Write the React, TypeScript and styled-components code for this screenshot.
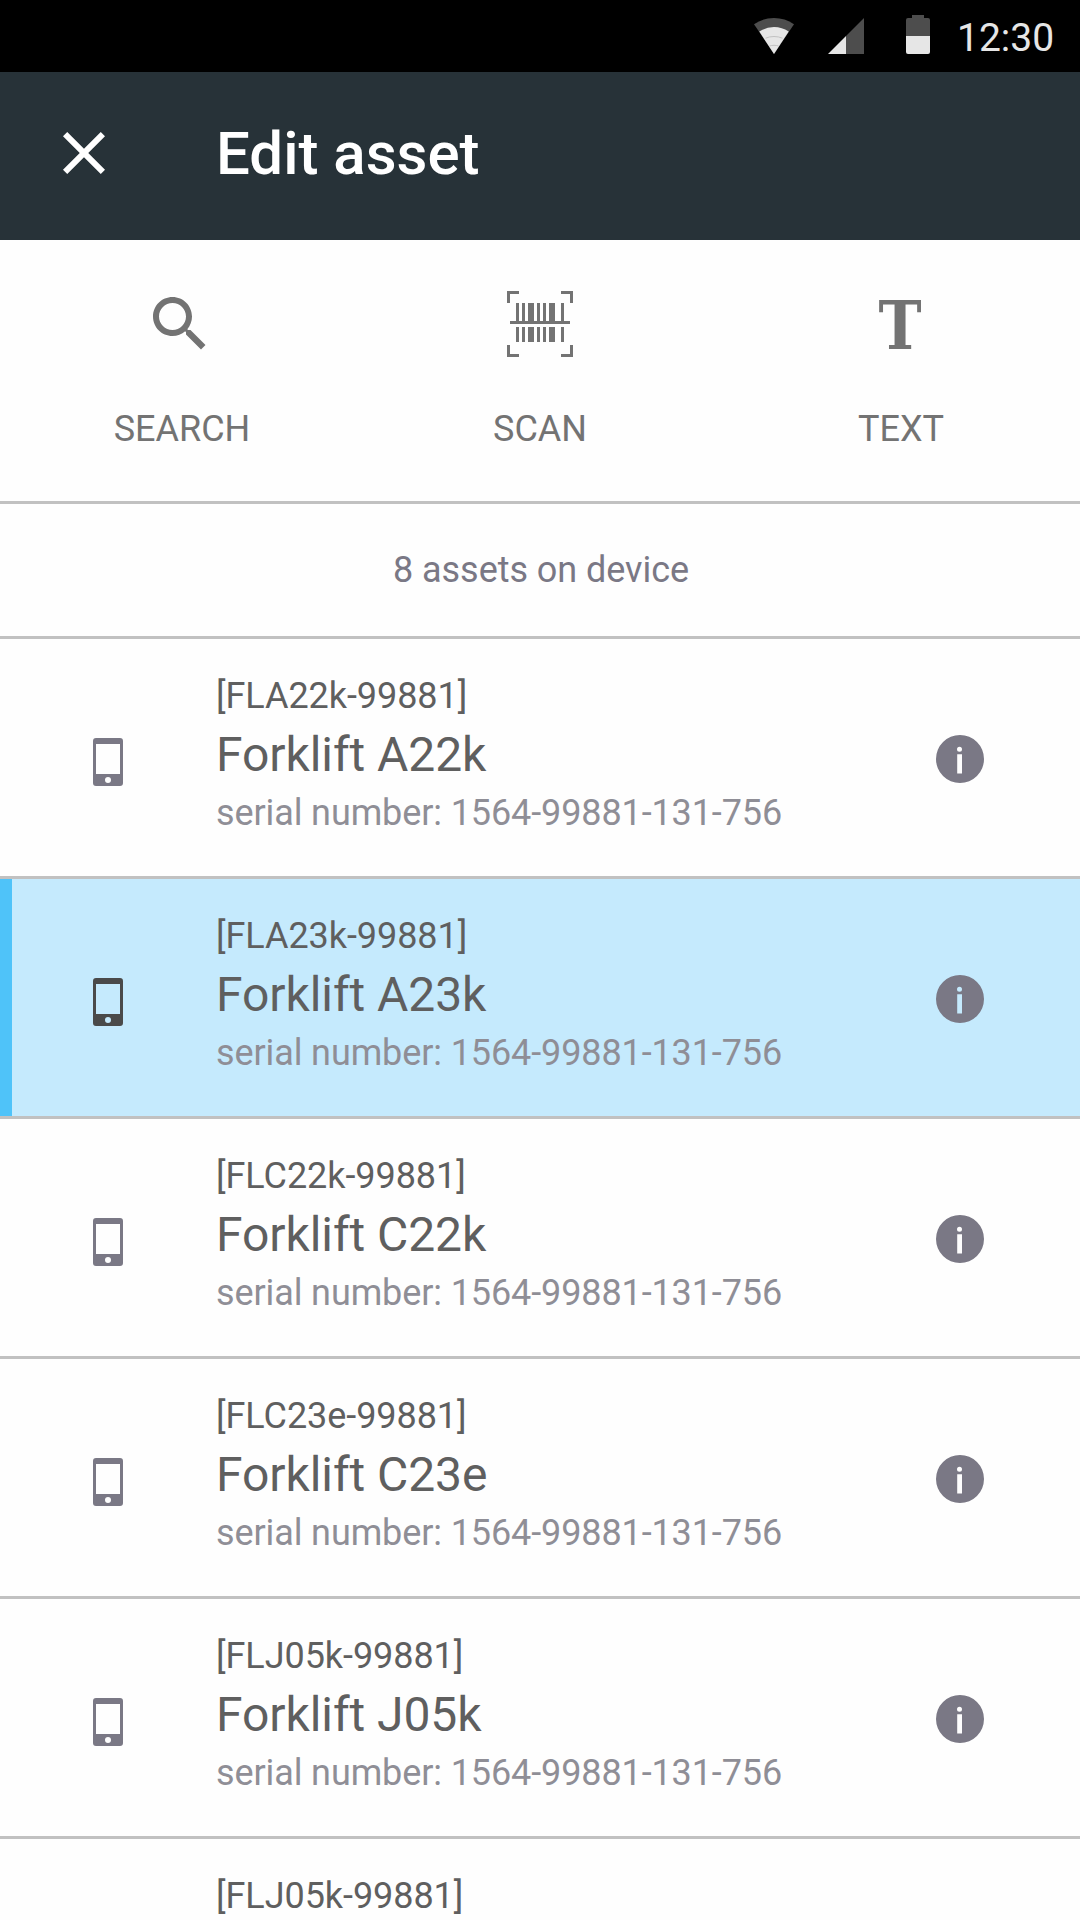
import React from "react";
import styled, { createGlobalStyle } from "styled-components";

const GlobalStyle = createGlobalStyle`
  html, body { margin: 0; padding: 0; background: #fefefe; }
  body { overflow: hidden; font-family: Roboto, "Liberation Sans", sans-serif; }
  * { box-sizing: border-box; }
  svg { display: block; flex: none; }
`;

const Screen = styled.main`
  width: 1080px;
  height: 1920px;
  overflow: hidden;
  display: flex;
  flex-direction: column;
  background: #fefefe;
`;

const StatusBar = styled.div`
  flex: none;
  height: 72px;
  padding-left: 754px;
  display: flex;
  align-items: flex-start;
  background: #000;
  color: #e6e6e6;
`;

const StatusIcon = styled.svg<{ $top: number; $gap: number }>`
  margin-top: ${(p) => p.$top}px;
  margin-right: ${(p) => p.$gap}px;
`;

const Clock = styled.span`
  margin-top: 14px;
  font-size: 39px;
  line-height: 48px;
`;

const AppBar = styled.header`
  flex: none;
  height: 168px;
  padding: 45px 48px 0;
  display: flex;
  align-items: flex-start;
  gap: 96px;
  background: #273238;
  color: #fff;
`;

const IconButton = styled.button`
  padding: 0;
  border: 0;
  background: none;
  color: inherit;
`;

const Title = styled.h1`
  margin: 1px 0 0;
  font-size: 60px;
  line-height: 71px;
  font-weight: 500;
`;

const Tools = styled.nav`
  flex: none;
  height: 264px;
  padding-top: 48px;
  display: grid;
  grid-template-columns: repeat(3, 1fr);
  border-bottom: 3px solid #c1c1c1;
  color: #737373;
`;

const Tool = styled.div`
  display: flex;
  flex-direction: column;
  align-items: center;
  gap: 48px;
`;

const ToolLabel = styled.span<{ $shift?: number }>`
  padding-left: ${(p) => p.$shift ?? 0}px;
  font-size: 36px;
  line-height: 42px;
`;

const TextGlyph = styled.span`
  width: 72px;
  height: 72px;
  text-align: center;
  font-family: "DejaVu Serif Condensed", "DejaVu Serif", serif;
  font-stretch: condensed;
  font-weight: 700;
  font-size: 67px;
  line-height: 75px;
  transform: scaleX(0.96);
`;

const Count = styled.p`
  flex: none;
  height: 135px;
  margin: 0;
  padding: 45px 0 0 2px;
  border-bottom: 3px solid #c1c1c1;
  text-align: center;
  font-size: 36px;
  line-height: 42px;
  letter-spacing: -0.05px;
  color: #7a7885;
`;

const List = styled.ul`
  margin: 0;
  padding: 0;
  list-style: none;
`;

const Row = styled.li<{ $selected?: boolean }>`
  height: 240px;
  padding-right: 96px;
  display: flex;
  align-items: flex-start;
  border-bottom: 3px solid #c1c1c1;
  background: ${(p) => (p.$selected ? "#c5eafd" : "transparent")};
`;

const Marker = styled.span<{ $selected?: boolean }>`
  flex: none;
  width: 12px;
  align-self: stretch;
  background: ${(p) => (p.$selected ? "#4fc3f9" : "transparent")};
`;

const PhoneSlot = styled.span<{ $selected?: boolean }>`
  margin: 99px 93px 0 81px;
  color: ${(p) => (p.$selected ? "#4a4a4a" : "#7a7885")};
`;

const Details = styled.div`
  flex: 1;
  padding-top: 36px;
  display: flex;
  flex-direction: column;
  gap: 9px;
`;

const Code = styled.span`
  font-size: 36px;
  line-height: 42px;
  letter-spacing: -0.06px;
  color: #5f5f5f;
`;

const Name = styled.span`
  font-size: 48px;
  line-height: 57px;
  letter-spacing: -0.07px;
  color: #5f5f5f;
`;

const Serial = styled.span`
  font-size: 36px;
  line-height: 42px;
  letter-spacing: -0.11px;
  color: #8f8e96;
`;

const InfoSlot = styled(IconButton)`
  margin-top: 96px;
  color: #7a7885;
`;

const PhoneIcon = () => (
  <svg width="30" height="48" viewBox="0 0 30 48" fill="currentColor">
    <path
      fillRule="evenodd"
      d="M3 0H27a3 3 0 0 1 3 3V45a3 3 0 0 1-3 3H3a3 3 0 0 1-3-3V3a3 3 0 0 1 3-3ZM3 6V36H27V6ZM15 39a3 3 0 1 0 0 6 3 3 0 0 0 0-6Z"
    />
  </svg>
);

const InfoIcon = () => (
  <svg width="48" height="48" viewBox="0 0 48 48" fill="currentColor">
    <path
      fillRule="evenodd"
      d="M24 0a24 24 0 1 0 0 48 24 24 0 0 0 0-48ZM23.5 11.8a2.5 2.5 0 1 1 0 5 2.5 2.5 0 0 1 0-5ZM21.2 19.3H26V38.5H21.2Z"
    />
  </svg>
);

const bars: [number, number][] = [
  [12, 3],
  [18, 3],
  [24, 6],
  [33, 3],
  [39, 3],
  [45, 6],
  [57, 3],
];

const ScanIcon = () => (
  <svg width="72" height="72" viewBox="0 0 72 72" fill="currentColor">
    <path
      d="M4.500 15V4.500H15M57 4.500H67.500V15M67.500 57V67.500H57M15 67.500H4.500V57"
      fill="none"
      stroke="currentColor"
      strokeWidth="3"
    />
    <rect x="6" y="33" width="60" height="3" />
    {bars.map(([x, w]) => (
      <React.Fragment key={x}>
        <rect x={x} y="15" width={w} height="18" />
        <rect x={x} y="39" width={w} height="15" />
      </React.Fragment>
    ))}
  </svg>
);

const assets = [
  { code: "[FLA22k-99881]", name: "Forklift A22k" },
  { code: "[FLA23k-99881]", name: "Forklift A23k", selected: true },
  { code: "[FLC22k-99881]", name: "Forklift C22k" },
  { code: "[FLC23e-99881]", name: "Forklift C23e" },
  { code: "[FLJ05k-99881]", name: "Forklift J05k" },
];

export default function App() {
  return (
    <Screen>
      <GlobalStyle />
      <StatusBar>
        <StatusIcon $top={18} $gap={34} width="40" height="36" viewBox="0 0 40 36">
          <path d="M20 36L0 6.200Q9 0 20 0T40 6.200Z" fill="#4d4d4d" />
          <path d="M20 36L5.300 13.500Q12 9 20 9T34.700 13.500Z" fill="#e6e6e6" />
          <path
            d="M11.500 20.200Q15.500 18.500 20 18.500T28.500 20.200M15.500 28Q17.500 27.300 20 27.300T24.500 28"
            fill="none"
            stroke="#b8b8b8"
            strokeWidth="0.8"
          />
        </StatusIcon>
        <StatusIcon $top={18} $gap={42} width="36" height="36" viewBox="0 0 36 36">
          <path d="M18 18L36 0V36H18Z" fill="#4d4d4d" />
          <path d="M0 36L18 18V36Z" fill="#e6e6e6" />
        </StatusIcon>
        <StatusIcon $top={15} $gap={27} width="24" height="39" viewBox="0 0 24 39">
          <path d="M0 21V5a2 2 0 0 1 2-2H6V0H18V3H22a2 2 0 0 1 2 2V21Z" fill="#4d4d4d" />
          <path d="M0 21H24V37a2 2 0 0 1-2 2H2a2 2 0 0 1-2-2Z" fill="#e6e6e6" />
        </StatusIcon>
        <Clock>12:30</Clock>
      </StatusBar>

      <AppBar>
        <IconButton aria-label="Close">
          <svg width="72" height="72" viewBox="0 0 24 24" fill="currentColor">
            <path d="M19 6.410L17.590 5 12 10.590 6.410 5 5 6.410 10.590 12 5 17.590 6.410 19 12 13.410 17.590 19 19 17.590 13.410 12z" />
          </svg>
        </IconButton>
        <Title>Edit asset</Title>
      </AppBar>

      <Tools>
        <Tool>
          <svg width="72" height="72" viewBox="0 0 24 24" fill="currentColor">
            <path d="M15.500 14h-.79l-.28-.27C15.410 12.590 16 11.110 16 9.500 16 5.910 13.090 3 9.500 3S3 5.910 3 9.500 5.910 16 9.500 16c1.610 0 3.090-.59 4.230-1.570l.27.28v.79l5 4.990L20.490 19l-4.990-5zm-6 0C7.010 14 5 11.990 5 9.500S7.010 5 9.500 5 14 7.010 14 9.500 11.990 14 9.500 14z" />
          </svg>
          <ToolLabel $shift={4}>SEARCH</ToolLabel>
        </Tool>
        <Tool>
          <ScanIcon />
          <ToolLabel>SCAN</ToolLabel>
        </Tool>
        <Tool>
          <TextGlyph>T</TextGlyph>
          <ToolLabel $shift={2}>TEXT</ToolLabel>
        </Tool>
      </Tools>

      <Count>8 assets on device</Count>

      <List>
        {assets.map((a) => (
          <Row key={a.code} $selected={a.selected}>
            <Marker $selected={a.selected} />
            <PhoneSlot $selected={a.selected}>
              <PhoneIcon />
            </PhoneSlot>
            <Details>
              <Code>{a.code}</Code>
              <Name>{a.name}</Name>
              <Serial>serial number: 1564-99881-131-756</Serial>
            </Details>
            <InfoSlot aria-label="Info">
              <InfoIcon />
            </InfoSlot>
          </Row>
        ))}
        <Row>
          <Marker />
          <PhoneSlot>
            <PhoneIcon />
          </PhoneSlot>
          <Details>
            <Code>[FLJ05k-99881]</Code>
          </Details>
        </Row>
      </List>
    </Screen>
  );
}
